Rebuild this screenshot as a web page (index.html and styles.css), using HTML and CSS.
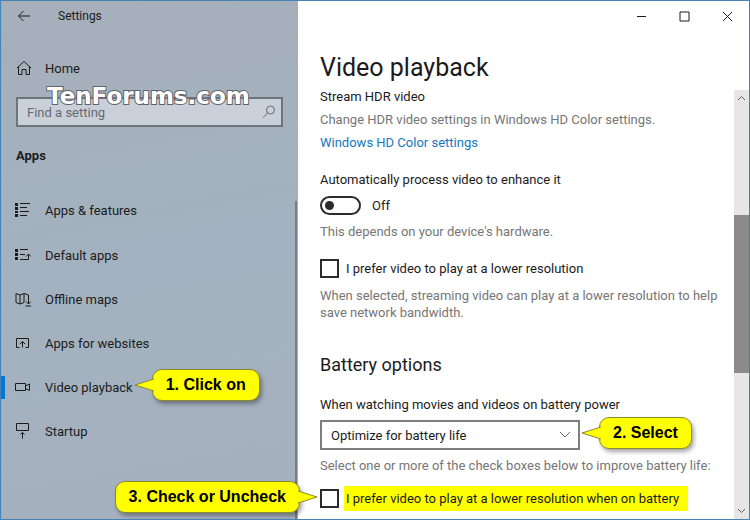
FILE: index.html
```html
<!DOCTYPE html>
<html lang="en">

<head>
    <meta charset="UTF-8">
    <meta name="viewport" content="width=device-width, initial-scale=1.0">
    <title>Settings</title>
    <link rel="stylesheet" href="styles.css">
</head>

<body>
    <div class="window">

        <aside class="sidebar">
            <div class="app-bar">
                <button class="back-btn" aria-label="Back">
                    <svg width="14" height="12" viewBox="0 0 14 12"><path d="M13 6H2M6.500 1L1.500 6l5 5"/></svg>
                </button>
                <span>Settings</span>
            </div>

            <a href="#" class="home-link">
                <svg width="16" height="16" viewBox="0 0 16 16"><path d="M1 8L8 1.500L15 8M2.500 7v7.500H6V9.500h4v5h3.500V7"/></svg>
                Home
            </a>

            <div class="search">
                <input type="text" placeholder="Find a setting" aria-label="Find a setting">
                <svg width="14" height="14" viewBox="0 0 14 14"><circle cx="8.500" cy="5" r="4"/><path d="M5.700 7.900L1 12.800"/></svg>
                <span class="watermark">TenForums.com</span>
            </div>

            <h2 class="section-name">Apps</h2>

            <nav>
                <a href="#">
                    <svg width="16" height="16" viewBox="0 0 16 16"><path class="fill" d="M0 1h3v3H0zM0 5h3v3H0zM0 9h3v2H0zM0 12h3v3H0z"/><path d="M5 1.500h10M5 5.500h7M5 9.500h9M5 13.500h7"/></svg>
                    Apps &amp; features
                </a>
                <a href="#">
                    <svg width="16" height="16" viewBox="0 0 16 16"><path class="fill" d="M0 2h3v3H0zM0 6h3v3H0zM0 10h3v3H0z"/><path d="M5 2.500h8M5 7.500h5M5 12.500h8.500V7.500M11 9.500l2.500-2.500L16 9.500"/></svg>
                    Default apps
                </a>
                <a href="#">
                    <svg width="16" height="16" viewBox="0 0 16 16"><path d="M9 11.500L5 13l-4-1.500V2.500L5 4l4-1.500L13.500 4v3M5 4v9M9 2.500v9M13.500 6v7M11 10.500l2.500 2.500 2.500-2.500M10.500 15H16"/></svg>
                    Offline maps
                </a>
                <a href="#">
                    <svg width="16" height="16" viewBox="0 0 16 16"><path d="M4.500 12.500H1.500v-9h12v9H10.500M7.500 12.500V6.500M5 9l2.500-2.500L10 9"/></svg>
                    Apps for websites
                </a>
                <a href="#" class="active">
                    <svg width="16" height="16" viewBox="0 0 16 16"><path d="M.5 4.500h10v7H.5zM10.500 7l4-2v6.500l-4-2"/></svg>
                    <span class="callout-anchor">Video playback
                        <span class="callout callout-right">1. Click on
                            <svg class="tail" width="20" height="14" viewBox="0 0 20 14"><path d="M20 1L1 7l19 6"/></svg>
                        </span>
                    </span>
                </a>
                <a href="#">
                    <svg width="16" height="16" viewBox="0 0 16 16"><path d="M1.500.5h12v7h-12zM7.500 15.500V9.500M5.500 11.500l2-2 2 2"/></svg>
                    Startup
                </a>
            </nav>
        </aside>

        <main>
            <div class="window-buttons">
                <button aria-label="Minimize"><svg width="11" height="11" viewBox="0 0 11 11"><path d="M1 5.500h9"/></svg></button>
                <button aria-label="Maximize"><svg width="11" height="11" viewBox="0 0 11 11"><path d="M1 1h9v9H1z"/></svg></button>
                <button aria-label="Close"><svg width="11" height="11" viewBox="0 0 11 11"><path d="M1 1l9 9M10 1l-9 9"/></svg></button>
            </div>

            <h1>Video playback</h1>

            <div class="page">
                <div class="content">
                    <section>
                        <h3>Stream HDR video</h3>
                        <p>Change HDR video settings in Windows HD Color settings.</p>
                        <a href="#">Windows HD Color settings</a>
                    </section>

                    <section class="enhance">
                        <label for="enhance">Automatically process video to enhance it</label>
                        <div class="toggle-row">
                            <input type="checkbox" role="switch" id="enhance" class="toggle">
                            <span>Off</span>
                        </div>
                        <p>This depends on your device's hardware.</p>
                    </section>

                    <section class="lower-res">
                        <label class="check-row">
                            <input type="checkbox" class="check">
                            <span class="check-text">I prefer video to play at a lower resolution</span>
                        </label>
                        <p>When selected, streaming video can play at a lower resolution to help save network bandwidth.</p>
                    </section>

                    <section class="battery">
                        <h2>Battery options</h2>
                        <label for="battery-power">When watching movies and videos on battery power</label>
                        <div class="select-box">
                            <select id="battery-power">
                                <option>Optimize for battery life</option>
                                <option>Optimize for video quality</option>
                            </select>
                            <svg class="arrow" width="12" height="8" viewBox="0 0 12 8"><path d="M1 1l5 5 5-5"/></svg>
                            <span class="callout callout-right">2. Select
                                <svg class="tail" width="20" height="14" viewBox="0 0 20 14"><path d="M20 1L1 7l19 6"/></svg>
                            </span>
                        </div>
                        <p>Select one or more of the check boxes below to improve battery life:</p>
                        <label class="check-row">
                            <input type="checkbox" class="check">
                            <span class="check-text highlight">I prefer video to play at a lower resolution when on battery</span>
                            <span class="callout callout-left">3. Check or Uncheck
                                <svg class="tail" width="20" height="14" viewBox="0 0 20 14"><path d="M0 1l19 6L0 13"/></svg>
                            </span>
                        </label>
                    </section>
                </div>

                <div class="scrollbar">
                    <button aria-label="Scroll up"><svg width="9" height="6" viewBox="0 0 9 6"><path d="M1 5l3.500-3.500L8 5"/></svg></button>
                    <div class="track">
                        <div class="thumb"></div>
                    </div>
                    <button aria-label="Scroll down"><svg width="9" height="6" viewBox="0 0 9 6"><path d="M1 1l3.500 3.500L8 1"/></svg></button>
                </div>
            </div>
        </main>

    </div>
</body>

</html>
```
FILE: styles.css
```css
* {
    box-sizing: border-box;
}

body {
    margin: 0;
    font-family: Roboto, "Open Sans", sans-serif;
    font-size: 13px;
    line-height: 17px;
    color: #1b1b1b;
}

h1, h2, h3, p {
    margin: 0;
    font-weight: normal;
}

h3 {
    font-size: 13px;
}

button {
    display: flex;
    align-items: center;
    justify-content: center;
    padding: 0;
    border: none;
    background: none;
}

svg {
    flex: none;
    fill: none;
    stroke: #1b1b1b;
}

.fill {
    fill: #1b1b1b;
    stroke: none;
}

.window {
    display: grid;
    grid-template-columns: 297px 1fr;
    min-height: 100vh;
    border: 1px solid #4683b4;
    background: #fff;
}

/* sidebar */
.sidebar {
    display: flex;
    flex-direction: column;
    border-left: 1px solid #8fb0cf;
    background: linear-gradient(170deg, #a6afba, #a3b2c0 50%, #a6b0be);
}

.app-bar {
    display: flex;
    align-items: center;
    gap: 27px;
    height: 30px;
    padding-left: 15px;
    font-size: 12px;
}

.home-link {
    display: flex;
    align-items: center;
    gap: 13px;
    margin-top: 21px;
    height: 32px;
    padding-left: 14px;
    color: #1b1b1b;
    text-decoration: none;
}

.search {
    position: relative;
    display: flex;
    margin: 13px 15px 0 14px;
}

.search input {
    width: 100%;
    height: 30px;
    padding: 0 32px 0 9px;
    border: 2px solid #6d747d;
    border-radius: 0;
    background: #cad0da;
    font: inherit;
}

.search input::placeholder {
    color: #646a73;
}

.search svg {
    position: absolute;
    right: 7px;
    top: 8px;
    stroke: #646a73;
}

.watermark {
    position: absolute;
    left: 31px;
    top: -14px;
    font-family: "DejaVu Sans", sans-serif;
    font-size: 23px;
    font-weight: bold;
    line-height: 26px;
    color: #fff;
    -webkit-text-stroke: 2px #5c636b;
    paint-order: stroke fill;
}

.section-name {
    margin: 20px 0 0 14px;
    font-size: 13px;
    font-weight: bold;
}

nav {
    flex: 1;
    margin: 37px 1px 0 0;
    border-right: 2px solid #757d86;
}

nav a {
    display: flex;
    align-items: center;
    gap: 14px;
    height: 44px;
    padding-left: 13px;
    color: #1b1b1b;
    text-decoration: none;
}

nav a:first-child {
    height: 18px;
    margin-bottom: 14px;
}

nav .active {
    position: relative;
}

nav .active::before {
    content: "";
    position: absolute;
    left: -1px;
    width: 4px;
    height: 23px;
    background: #0078d7;
}

/* main area */
main {
    display: flex;
    flex-direction: column;
}

.window-buttons {
    display: flex;
    justify-content: flex-end;
}

.window-buttons button {
    width: 43px;
    height: 30px;
}

h1 {
    padding-left: 22px;
    margin-top: 19px;
    font-size: 25px;
    line-height: 36px;
}

.page {
    flex: 1;
    display: flex;
}

.content {
    flex: 1;
    padding: 2px 14px 7px 22px;
}

.content p {
    color: #767676;
}

.content section {
    display: flex;
    flex-direction: column;
    align-items: flex-start;
    gap: 6px;
}

.content a {
    color: #1378be;
    text-decoration: none;
}

.content .enhance {
    margin-top: 20px;
    gap: 8px;
}

.toggle-row {
    display: flex;
    align-items: center;
    gap: 11px;
}

.toggle {
    appearance: none;
    display: flex;
    align-items: center;
    width: 41px;
    height: 19px;
    margin: 0;
    padding-left: 3px;
    border: 2px solid #2b2b2b;
    border-radius: 10px;
}

.toggle::before {
    content: "";
    width: 9px;
    height: 9px;
    border-radius: 50%;
    background: #2b2b2b;
}

.content .lower-res {
    margin-top: 16px;
}

.check-row {
    position: relative;
    display: flex;
    align-items: center;
    gap: 5px;
}

.check {
    appearance: none;
    width: 19px;
    height: 19px;
    margin: 0;
    border: 2px solid #2b2b2b;
    background: #fff;
}

.check-text {
    padding: 4px 2px;
}

.highlight {
    background: #ffff00;
    padding-right: 9px;
}

.content .battery {
    margin-top: 32px;
    gap: 7px;
}

.battery h2 {
    margin-bottom: 12px;
    font-size: 18px;
    line-height: 24px;
}

.select-box {
    position: relative;
    width: 260px;
}

.select-box select {
    appearance: none;
    display: block;
    width: 100%;
    height: 30px;
    padding: 0 32px 0 9px;
    border: 2px solid #7e7e7e;
    border-radius: 0;
    background: #fff;
    color: #1b1b1b;
    font: inherit;
}

.arrow {
    position: absolute;
    right: 9px;
    top: 11px;
    stroke: #666;
    pointer-events: none;
}

.battery .check-row {
    margin-top: 5px;
}

/* callouts */
.callout-anchor {
    position: relative;
}

.callout {
    position: absolute;
    top: 50%;
    margin-top: -18px;
    padding: 0 13px;
    border: 1px solid #8a8a30;
    border-radius: 10px;
    background: #ffff00;
    box-shadow: 2px 3px 4px rgba(0, 0, 0, 0.35);
    font-family: "Liberation Sans", Arial, sans-serif;
    font-size: 16px;
    font-weight: bold;
    line-height: 30px;
    color: #000;
    white-space: nowrap;
}

.callout-right {
    left: 100%;
    margin-left: 19px;
}

.callout-left {
    right: 100%;
    margin-right: 20px;
}

.tail {
    position: absolute;
    top: 8px;
    fill: #ffff00;
    stroke: #8a8a30;
}

.callout-right .tail {
    right: 100%;
    margin-right: -1px;
}

.callout-left .tail {
    left: 100%;
    margin-left: -1px;
}

/* scrollbar */
.scrollbar {
    display: flex;
    flex-direction: column;
    width: 15px;
    margin-top: 4px;
    background: #e6e6e6;
}

.scrollbar button {
    height: 16px;
}

.scrollbar svg {
    stroke: #606060;
}

.track {
    flex: 1;
    display: grid;
    grid-template-rows: 109fr 158fr 130fr;
}

.thumb {
    grid-row: 2;
    background: #8b8b8b;
}
```
